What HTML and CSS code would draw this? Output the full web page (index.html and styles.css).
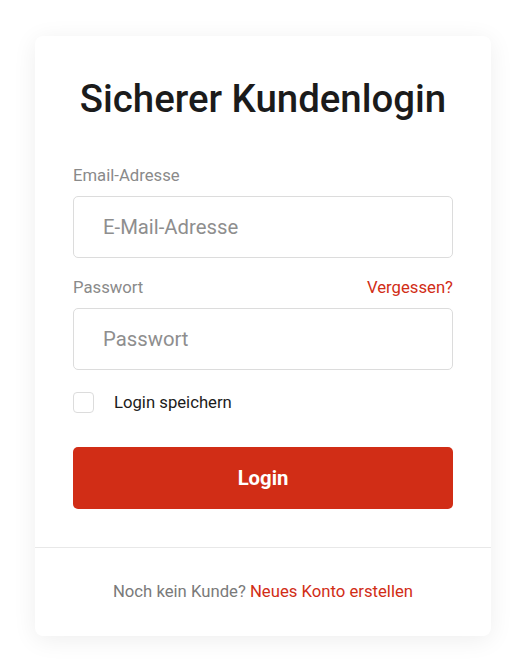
FILE: index.html
```html
<!DOCTYPE html>
<html lang="de">
<head>
<meta charset="utf-8">
<title>Sicherer Kundenlogin</title>
<link rel="stylesheet" href="styles.css">
</head>
<body>
<div class="card">
  <form class="form">
    <h1 class="title">Sicherer Kundenlogin</h1>
    <div class="field">
      <label class="label" for="email">Email-Adresse</label>
      <input class="input" id="email" type="email" placeholder="E-Mail-Adresse">
    </div>
    <div class="field">
      <div class="label-row">
        <label class="label" for="pw">Passwort</label>
        <a class="link" href="#">Vergessen?</a>
      </div>
      <input class="input" id="pw" type="password" placeholder="Passwort">
    </div>
    <label class="remember">
      <span class="box"></span>
      <span>Login speichern</span>
    </label>
    <button class="btn" type="button">Login</button>
  </form>
  <div class="footer">
    Noch kein Kunde? <a class="link" href="#">Neues Konto erstellen</a>
  </div>
</div>
</body>
</html>
```
FILE: styles.css
```css
* { box-sizing: border-box; }
html, body { margin: 0; background: #fff; }
body {
  font-family: Roboto, "Liberation Sans", sans-serif;
  padding: 36px 30px 26px 35px;
}
.card {
  width: 456px;
  background: #fff;
  border-radius: 8px;
  box-shadow: 0 4px 24px rgba(0, 0, 0, 0.07);
}
.form {
  padding: 40px 38px 38px;
  display: flex;
  flex-direction: column;
}
.title {
  margin: 0 0 44px;
  text-align: center;
  font-size: 38.4px;
  font-weight: 500;
  line-height: 46px;
  color: #1b1b1b;
}
.field {
  display: flex;
  flex-direction: column;
  gap: 10px;
  margin-bottom: 20px;
}
.label-row {
  display: flex;
  justify-content: space-between;
  align-items: baseline;
}
.label {
  font-size: 16.7px;
  line-height: 20px;
  color: #8a8a8a;
}
.link {
  color: #d12d16;
  text-decoration: none;
  font-size: 16.7px;
}
.input {
  height: 62px;
  border: 1px solid #dcdcdc;
  border-radius: 5px;
  padding: 0 29px;
  font-family: inherit;
  font-size: 20.3px;
  color: #333;
  outline: none;
}
.input::placeholder { color: #8e8e8e; }
.remember {
  display: flex;
  align-items: center;
  gap: 20px;
  font-size: 16.7px;
  line-height: 20px;
  color: #1b1b1b;
  margin-top: 2px;
}
.box {
  width: 21px;
  height: 21px;
  border: 1px solid #dcdcdc;
  border-radius: 4px;
}
.btn {
  margin-top: 34px;
  height: 62px;
  border: 0;
  border-radius: 5px;
  background: #d12d16;
  color: #fff;
  font-family: inherit;
  font-size: 20.3px;
  font-weight: 700;
}
.footer {
  border-top: 1px solid #e8e8e8;
  padding: 34px 0 34px;
  text-align: center;
  font-size: 16.7px;
  line-height: 20px;
  color: #7a7a7a;
}
```
